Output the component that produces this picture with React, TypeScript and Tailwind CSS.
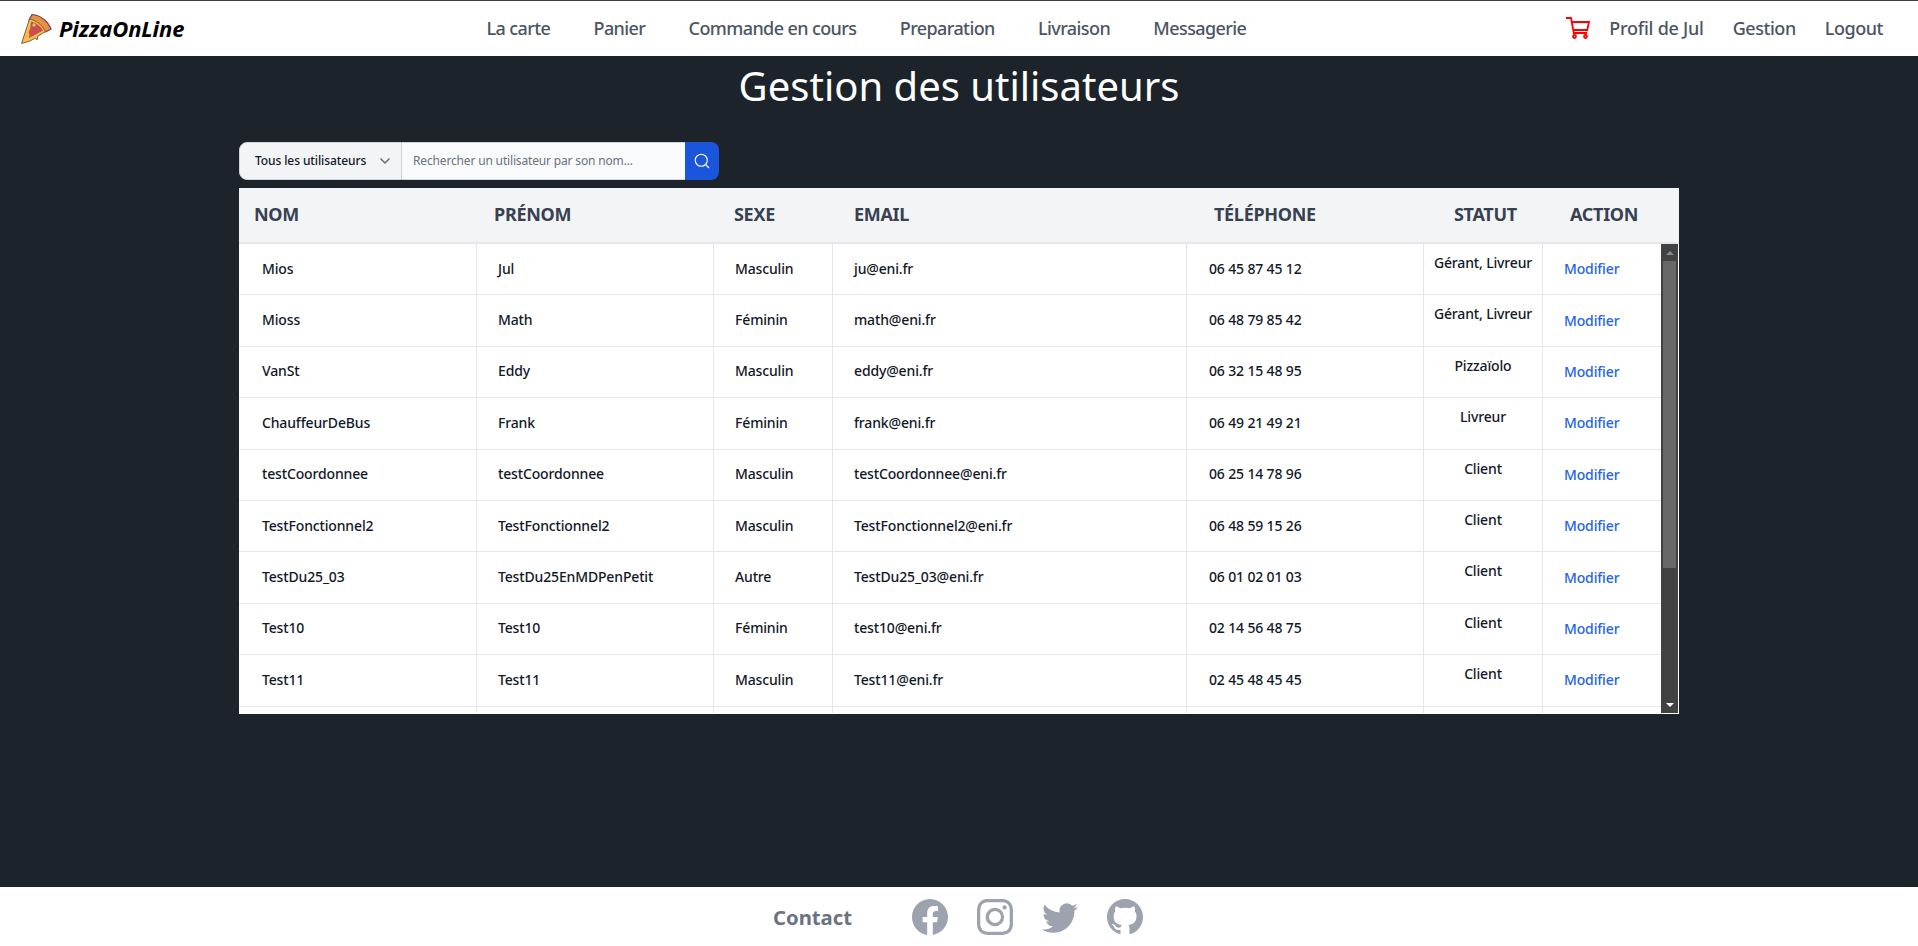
import React from 'react';
import { BsFacebook, BsInstagram, BsTwitter, BsGithub } from 'react-icons/bs';
import { ChevronDown, Search } from 'lucide-react';

const leftLinks = ['La carte', 'Panier', 'Commande en cours', 'Preparation', 'Livraison', 'Messagerie'];

const users = [
  { nom: 'Mios', prenom: 'Jul', sexe: 'Masculin', email: 'ju@eni.fr', tel: '06 45 87 45 12', statut: 'Gérant, Livreur' },
  { nom: 'Mioss', prenom: 'Math', sexe: 'Féminin', email: 'math@eni.fr', tel: '06 48 79 85 42', statut: 'Gérant, Livreur' },
  { nom: 'VanSt', prenom: 'Eddy', sexe: 'Masculin', email: 'eddy@eni.fr', tel: '06 32 15 48 95', statut: 'Pizzaïolo' },
  { nom: 'ChauffeurDeBus', prenom: 'Frank', sexe: 'Féminin', email: 'frank@eni.fr', tel: '06 49 21 49 21', statut: 'Livreur' },
  { nom: 'testCoordonnee', prenom: 'testCoordonnee', sexe: 'Masculin', email: 'testCoordonnee@eni.fr', tel: '06 25 14 78 96', statut: 'Client' },
  { nom: 'TestFonctionnel2', prenom: 'TestFonctionnel2', sexe: 'Masculin', email: 'TestFonctionnel2@eni.fr', tel: '06 48 59 15 26', statut: 'Client' },
  { nom: 'TestDu25_03', prenom: 'TestDu25EnMDPenPetit', sexe: 'Autre', email: 'TestDu25_03@eni.fr', tel: '06 01 02 01 03', statut: 'Client' },
  { nom: 'Test10', prenom: 'Test10', sexe: 'Féminin', email: 'test10@eni.fr', tel: '02 14 56 48 75', statut: 'Client' },
  { nom: 'Test11', prenom: 'Test11', sexe: 'Masculin', email: 'Test11@eni.fr', tel: '02 45 48 45 45', statut: 'Client' },
];

const PizzaLogo = () => (
  <svg viewBox="0 0 32 32" className="w-[32px] h-[32px] shrink-0">
    <path d="M12 1.500 C20 2 28 8 31 16 L25.500 19 L9 7 Z" fill="#e8913f" stroke="#6e3f5c" strokeWidth="1.200" strokeLinejoin="round" />
    <path d="M9.500 6 C16 7 22 12 25.500 18.500 L18 23 L17 27 L15.500 25 L10 28 L1.500 30.500 Z" fill="#f6bd4a" stroke="#8a5a4a" strokeWidth="1" strokeLinejoin="round" />
    <path d="M11 8.500 C16 9.500 20 13 23 17.500 L9 25 Z" fill="#b5555e" />
    <circle cx="11.500" cy="19" r="2.700" fill="#e2453f" />
    <circle cx="18.500" cy="16" r="2.500" fill="#e2453f" />
    <circle cx="14" cy="12" r="1.700" fill="#f6bd4a" />
  </svg>
);

const CartIcon = () => (
  <svg viewBox="0 0 24 22" className="w-[24px] h-[22px]" fill="none" stroke="#ff0000" strokeWidth="1.800">
    <path d="M0 1 H5 L7.800 16 H21" />
    <path d="M5.800 5 H23 L21.200 13 H7.200" />
    <circle cx="8.500" cy="19.500" r="1.500" />
    <circle cx="19.500" cy="19.500" r="1.500" />
  </svg>
);

const Navbar = () => (
  <nav className="h-[56px] shrink-0 bg-white border-t border-[#3f3f3f] flex items-center relative text-[18px] font-medium text-[#4b5563] tracking-[-0.6px]">
    <a className="flex items-center ml-[20px] gap-[7px]">
      <PizzaLogo />
      <span className="text-[22px] font-bold italic text-black tracking-[-0.1px]">PizzaOnLine</span>
    </a>
    <div className="ml-[302px] flex items-center gap-[43.3px] pb-[1px]">
      {leftLinks.map((l) => (
        <a key={l}>{l}</a>
      ))}
    </div>
    <div className="ml-auto mr-[35px] flex items-center pb-[1px]">
      <span className="mr-[19px]">
        <CartIcon />
      </span>
      <a className="tracking-[-0.25px]">Profil de Jul</a>
      <a className="ml-[29px] tracking-[-0.45px]">Gestion</a>
      <a className="ml-[29px] tracking-[-0.45px]">Logout</a>
    </div>
  </nav>
);

const SearchBar = () => (
  <div className="flex w-[480px] h-[38px] text-[12px]">
    <div className="w-[163px] flex items-center justify-between pl-[15px] pr-[8px] bg-[#f3f4f6] border border-[#d1d5db] rounded-l-lg text-[#111827] font-medium tracking-[-0.1px]">
      <span>Tous les utilisateurs</span>
      <ChevronDown size={16} strokeWidth={2.5} className="text-[#6b7280]" />
    </div>
    <div className="flex-1 flex items-center pl-[11px] bg-[#f9fafb] border-y border-[#d1d5db] text-[#6b7280] tracking-[-0.16px]">
      Rechercher un utilisateur par son nom...
    </div>
    <div className="w-[34px] flex items-center justify-center bg-[#1a56db] rounded-r-lg text-white">
      <Search size={18} strokeWidth={1.5} />
    </div>
  </div>
);

const TableHeader = () => (
  <div className="h-[56px] flex items-center pb-[2px] bg-[#f3f4f6] border-b-2 border-[#e5e7eb] text-[18px] font-bold text-[#374151] uppercase tracking-[-0.3px]">
    <div className="w-[240px] pl-[15px]">Nom</div>
    <div className="w-[240px] pl-[15px]">Prénom</div>
    <div className="w-[120px] pl-[15px]">Sexe</div>
    <div className="w-[360px] pl-[15px]">Email</div>
    <div className="w-[240px] pl-[15px]">Téléphone</div>
    <div className="w-[120px] pl-[15px]">Statut</div>
    <div className="w-[120px] pl-[11px]">Action</div>
  </div>
);

const cell = 'flex items-center pb-[2px] border-r border-[#e5e7eb]';

const Row = ({ u }: { u?: (typeof users)[number] }) => (
  <div className="grid grid-cols-[238px_237px_119px_354px_237px_119px_1fr] h-[51.4px] shrink-0 border-b border-[#e5e7eb] text-[14px] font-[480] text-[#111827] tracking-[-0.15px]">
    <div className={`${cell} pl-[23px]`}>{u?.nom}</div>
    <div className={`${cell} pl-[21px]`}>{u?.prenom}</div>
    <div className={`${cell} pl-[21px]`}>{u?.sexe}</div>
    <div className={`${cell} pl-[21px]`}>{u?.email}</div>
    <div className={`${cell} pl-[22px]`}>{u?.tel}</div>
    <div className="pt-[8px] text-center border-r border-[#e5e7eb]">{u?.statut}</div>
    <div className="flex items-center pl-[21px] pb-[1px] font-medium text-[#2563eb]">{u && 'Modifier'}</div>
  </div>
);

const Scrollbar = () => (
  <div className="w-[17px] shrink-0 bg-[#424242] flex flex-col items-center">
    <div className="h-[17px] flex items-center justify-center">
      <div className="w-0 h-0 border-x-[4px] border-x-transparent border-b-[4px] border-b-[#8a8a8a]" />
    </div>
    <div className="w-[13px] h-[307px] bg-[#686868]" />
    <div className="mt-auto h-[17px] flex items-center justify-center">
      <div className="w-0 h-0 border-x-[4px] border-x-transparent border-t-[4px] border-t-white" />
    </div>
  </div>
);

export default function App() {
  return (
    <div className="min-h-screen flex flex-col bg-[#1d232a] font-['Noto_Sans',sans-serif]">
      <Navbar />
      <main className="flex-1 flex flex-col items-center">
        <h1 className="h-[60px] text-[40px] leading-[60px] text-white">Gestion des utilisateurs</h1>
        <div className="w-[1440px] mt-[26px]">
          <SearchBar />
          <div className="mt-[8px] bg-white">
            <TableHeader />
            <div className="h-[470px] flex border-r border-b border-white overflow-hidden">
              <div className="flex-1 flex flex-col overflow-hidden">
                {users.map((u) => (
                  <Row key={u.email} u={u} />
                ))}
                <Row />
              </div>
              <Scrollbar />
            </div>
          </div>
        </div>
      </main>
      <footer className="h-[59px] shrink-0 bg-white flex items-center justify-center pr-[2px] text-[#9ca3af]">
        <span className="text-[20.3px] font-bold text-[#6b7280] mr-[60px] pt-[2px]">Contact</span>
        <div className="flex items-center gap-[29px]">
          <BsFacebook size={36} />
          <BsInstagram size={36} />
          <BsTwitter size={36} />
          <BsGithub size={36} />
        </div>
      </footer>
    </div>
  );
}
